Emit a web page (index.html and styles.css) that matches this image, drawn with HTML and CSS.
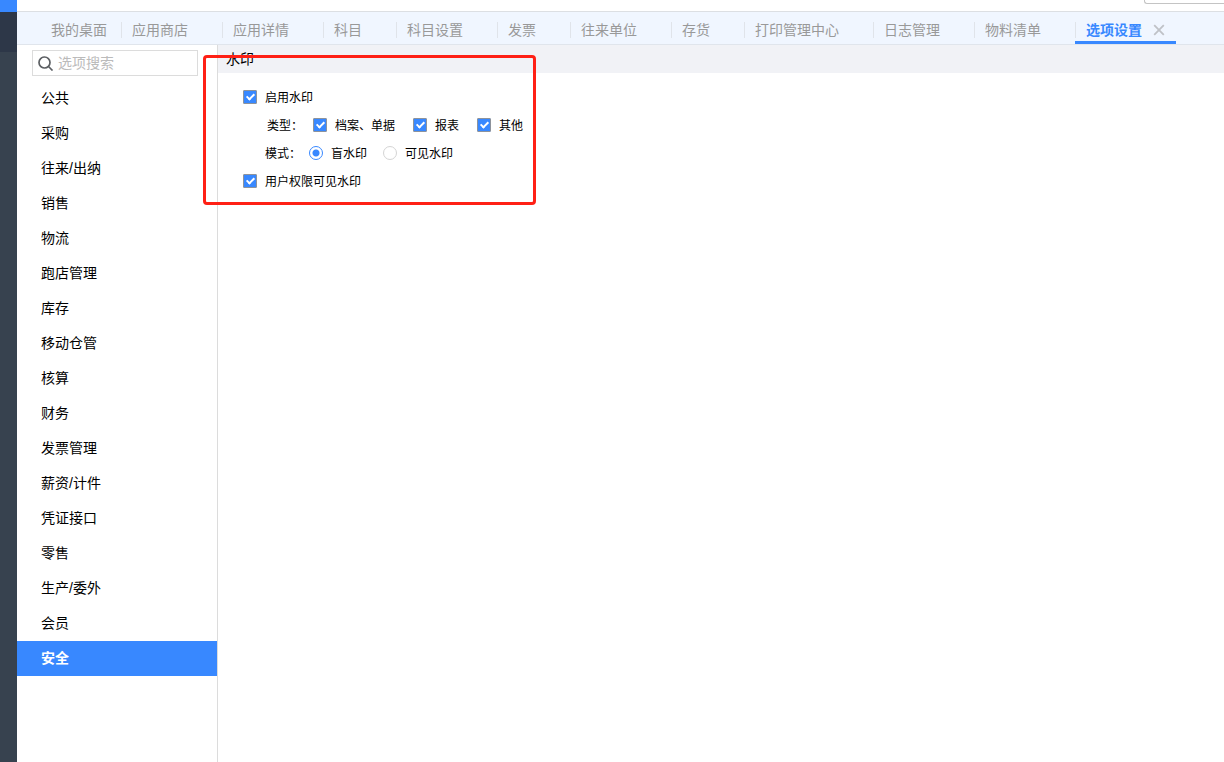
FILE: index.html
```html
<!DOCTYPE html>
<html lang="zh-CN">
<head>
    <meta charset="UTF-8">
    <meta name="viewport" content="width=device-width, initial-scale=1.0">
    <title>选项设置</title>
    <link rel="stylesheet" href="styles.css">
</head>
<body>

    <!-- 左侧导航条 -->
    <div class="rail">
        <div class="rail-logo"></div>
        <div class="rail-active"></div>
    </div>

    <div class="page">
        <div class="topbar">
            <div class="top-search"></div>
        </div>

        <!-- 页签 -->
        <nav class="tabs">
            <a href="#" class="tab home">我的桌面</a>
            <a href="#" class="tab">应用商店</a>
            <a href="#" class="tab">应用详情</a>
            <a href="#" class="tab">科目</a>
            <a href="#" class="tab">科目设置</a>
            <a href="#" class="tab">发票</a>
            <a href="#" class="tab">往来单位</a>
            <a href="#" class="tab">存货</a>
            <a href="#" class="tab">打印管理中心</a>
            <a href="#" class="tab">日志管理</a>
            <a href="#" class="tab">物料清单</a>
            <div class="tab active">
                <a href="#">选项设置</a>
                <button type="button" class="close" aria-label="关闭">
                    <svg width="12" height="12" viewBox="0 0 12 12"><path d="M1.2 1.2L10.8 10.8M10.8 1.2L1.2 10.8" fill="none" stroke="#bfc2c7" stroke-width="1.8"/></svg>
                </button>
            </div>
        </nav>

        <div class="main">
            <!-- 选项分类 -->
            <aside class="sidebar">
                <label class="search">
                    <svg width="16" height="16" viewBox="0 0 16 16"><g fill="none" stroke="#5c5f63" stroke-width="1.7"><circle cx="6.5" cy="7.5" r="5.5"/><path d="M10.5 11.5L14.5 15.5"/></g></svg>
                    <input type="text" placeholder="选项搜索" aria-label="选项搜索">
                </label>
                <nav class="menu">
                    <a href="#">公共</a>
                    <a href="#">采购</a>
                    <a href="#">往来/出纳</a>
                    <a href="#">销售</a>
                    <a href="#">物流</a>
                    <a href="#">跑店管理</a>
                    <a href="#">库存</a>
                    <a href="#">移动仓管</a>
                    <a href="#">核算</a>
                    <a href="#">财务</a>
                    <a href="#">发票管理</a>
                    <a href="#">薪资/计件</a>
                    <a href="#">凭证接口</a>
                    <a href="#">零售</a>
                    <a href="#">生产/委外</a>
                    <a href="#">会员</a>
                    <a href="#" class="active">安全</a>
                </nav>
            </aside>

            <!-- 水印设置 -->
            <section class="content">
                <h2>水印</h2>
                <form class="options">
                    <div class="row">
                        <label><input type="checkbox" checked>启用水印</label>
                    </div>
                    <div class="row types">
                        <span>类型：</span>
                        <label><input type="checkbox" checked>档案、单据</label>
                        <label><input type="checkbox" checked>报表</label>
                        <label><input type="checkbox" checked>其他</label>
                    </div>
                    <div class="row modes">
                        <span>模式：</span>
                        <label><input type="radio" name="mode" checked>盲水印</label>
                        <label><input type="radio" name="mode">可见水印</label>
                    </div>
                    <div class="row">
                        <label><input type="checkbox" checked>用户权限可见水印</label>
                    </div>
                </form>
                <div class="highlight"></div>
            </section>
        </div>
    </div>

</body>
</html>
```
FILE: styles.css
```css
*, *::before {
    box-sizing: border-box;
}
body {
    display: flex;
    min-height: 100vh;
    margin: 0;
    font-family: "Liberation Sans", "Noto Sans CJK SC", sans-serif;
    font-size: 14px;
    color: #000;
    background: #fff;
}
a {
    color: inherit;
    text-decoration: none;
}

/* 左侧导航条 */
.rail {
    flex: none;
    width: 17px;
    background: #37424f;
}
.rail-logo {
    height: 12px;
    background: #3888ff;
}
.rail-active {
    height: 40px;
    background: #2d3748;
}

.page {
    flex: 1;
    min-width: 0;
    display: flex;
    flex-direction: column;
}
.topbar {
    display: flex;
    justify-content: flex-end;
    height: 12px;
    border-bottom: 1px solid #dcdfe3;
}
.top-search {
    width: 80px;
    height: 4px;
    border: 1px solid #c4c4c4;
    border-width: 0 0 1px 1px;
    border-radius: 0 0 0 3px;
}

/* 页签 */
.tabs {
    display: flex;
    height: 33px;
    padding-left: 24px;
    background: #f0f6ff;
    border-bottom: 1px solid #e0e5ec;
    color: #999;
    overflow: hidden;
}
.tab {
    position: relative;
    flex: none;
    padding: 0 34px 0 11px;
    line-height: 36px;
    white-space: nowrap;
}
.tab::before {
    content: "";
    position: absolute;
    left: 0;
    top: 10px;
    width: 1px;
    height: 16px;
    background: #e0e4ea;
}
.tab.home {
    padding: 0 14px 0 10px;
}
.tab.home::before {
    display: none;
}
.tab.active {
    display: flex;
    align-items: flex-start;
    gap: 11px;
    height: 32px;
    padding-right: 11px;
    border-bottom: 3px solid #3888ff;
    color: #3888ff;
    font-weight: bold;
}
.close {
    display: flex;
    width: 12px;
    height: 12px;
    margin-top: 12px;
    padding: 0;
    border: 0;
    background: none;
}

.main {
    flex: 1;
    display: flex;
}

/* 选项分类 */
.sidebar {
    flex: none;
    width: 201px;
    padding-top: 5px;
    border-right: 1px solid #dcdcdc;
}
.search {
    display: flex;
    align-items: center;
    gap: 4px;
    height: 26px;
    margin: 0 19px 5px 15px;
    padding: 0 5px;
    border: 1px solid #dcdcdc;
}
.search svg {
    flex: none;
}
.search input {
    flex: 1;
    min-width: 0;
    padding: 0;
    border: 0;
    outline: 0;
    font: inherit;
}
.search input::placeholder {
    color: #bbb;
}
.menu a {
    display: block;
    height: 35px;
    padding-left: 24px;
    line-height: 35px;
}
.menu .active {
    background: #3888ff;
    color: #fff;
    font-weight: bold;
}

/* 水印设置 */
.content {
    position: relative;
    flex: 1;
    min-width: 0;
}
.content h2 {
    height: 28px;
    margin: 0;
    padding-left: 8px;
    background: #f1f2f6;
    font-size: 14px;
    font-weight: normal;
    line-height: 28px;
}
.options {
    padding: 10px 25px;
    font-size: 12px;
}
.row {
    display: flex;
    align-items: center;
    height: 28px;
    padding-bottom: 2px;
    white-space: nowrap;
}
.row label {
    display: flex;
    align-items: center;
    gap: 8px;
}
.types {
    gap: 18px;
    padding-left: 24px;
}
.types span {
    margin-right: -8px;
}
.modes {
    gap: 16px;
    padding-left: 22px;
}
.modes span {
    margin-right: -8px;
}
.row input {
    appearance: none;
    width: 14px;
    height: 14px;
    margin: 2px 0 0;
    border: 1px solid #d4d4d4;
    background: #fff;
}
.row input[type="checkbox"] {
    display: flex;
    justify-content: center;
    border-color: #8d939c;
    border-radius: 1px;
}
.row input[type="checkbox"]:checked {
    background: #3888ff;
}
.row input[type="checkbox"]:checked::before {
    content: "";
    width: 5px;
    height: 8px;
    margin-top: 1px;
    border: solid #fff;
    border-width: 0 2px 2px 0;
    transform: rotate(45deg);
}
.row input[type="radio"] {
    border-radius: 50%;
}
.row input[type="radio"]:checked {
    border-color: #3888ff;
    background: radial-gradient(circle, #3888ff 3px, #fff 4px);
}

/* 红色标注框 */
.highlight {
    position: absolute;
    left: -15px;
    top: 10px;
    width: 333px;
    height: 150px;
    border: 3px solid #ff2015;
    border-radius: 4px;
    pointer-events: none;
}
```
